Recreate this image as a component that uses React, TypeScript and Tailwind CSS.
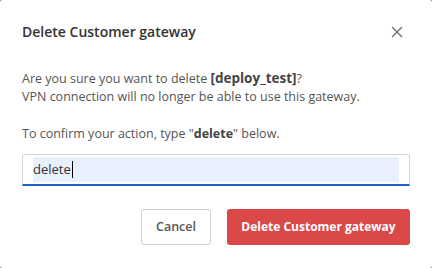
import { X } from "lucide-react";

export default function App() {
  return (
    <div className="h-[268px] w-[432px] bg-[#9a9a9a]">
      <div
        className="flex h-full w-full flex-col rounded-[3px] bg-white px-[22px] pt-[20px] text-[#555]"
        style={{ fontFamily: '"Open Sans", sans-serif' }}
      >
        <div className="flex items-center justify-between">
          <h2 className="text-[14px] font-semibold leading-[24px] text-[#333]">
            Delete Customer gateway
          </h2>
          <button type="button" className="mr-[4px] text-[#666]">
            <X className="h-[18px] w-[18px]" strokeWidth={1.6} />
          </button>
        </div>

        <div className="mt-[25px] text-[12.5px] leading-[18px]">
          <p>
            Are you sure you want to delete <b className="text-[13.5px] font-bold text-[#444]">[deploy_test]</b>?
          </p>
          <p>VPN connection will no longer be able to use this gateway.</p>
        </div>

        <p className="mt-[18px] text-[12.5px] leading-[19px]">
          To confirm your action, type "<b className="text-[12.5px] font-bold text-[#444]">delete</b>" below.
        </p>

        <div className="mt-[11px] rounded-t-[3px] border border-b-2 border-[#d6d6d6] border-b-[#1f63c9] px-[10px] py-[2px]">
          <div className="flex h-[25px] items-center bg-[#e8f0fe] text-[13px] text-[#333]">
            <span>delete</span>
            <span className="ml-[1px] h-[17px] w-[1px] bg-black" />
          </div>
        </div>

        <div className="mt-[23px] flex justify-end gap-[16px]">
          <button
            type="button"
            className="h-[36px] w-[70px] rounded-[3px] border border-[#cfcfcf] bg-white text-[12.5px] font-semibold text-[#555]"
          >
            Cancel
          </button>
          <button
            type="button"
            className="h-[36px] w-[183px] rounded-[3px] bg-[#db4848] text-[12px] font-bold text-white"
          >
            Delete Customer gateway
          </button>
        </div>
      </div>
    </div>
  );
}
